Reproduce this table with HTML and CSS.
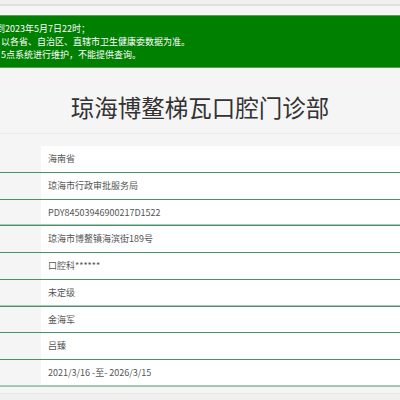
FILE: index.html
```html
<!DOCTYPE html>
<html lang="zh-CN">
<head>
<meta charset="utf-8">
<link rel="stylesheet" href="styles.css">
</head>
<body>
<div class="topbar"></div>
<div class="notice">到2023年5月7日22时；<br>以各省、自治区、直辖市卫生健康委数据为准。<br>5点系统进行维护，不能提供查询。</div>
<div class="titlebox"><h1 class="title">琼海博鳌梯瓦口腔门诊部</h1></div>
<div class="table">
  <div class="row"><div class="label"></div><div class="value">海南省</div></div>
  <div class="row"><div class="label"></div><div class="value">琼海市行政审批服务局</div></div>
  <div class="row sep"><div class="label"></div><div class="value">PDY84503946900217D1522</div></div>
  <div class="row"><div class="label"></div><div class="value">琼海市博鳌镇海滨街189号</div></div>
  <div class="row"><div class="label"></div><div class="value">口腔科******</div></div>
  <div class="row sep"><div class="label"></div><div class="value">未定级</div></div>
  <div class="row"><div class="label"></div><div class="value">金海军</div></div>
  <div class="row"><div class="label"></div><div class="value">吕臻</div></div>
  <div class="row sep"><div class="label"></div><div class="value">2021/3/16 -至- 2026/3/15</div></div>
</div>
<div class="footer"></div>
</body>
</html>
```
FILE: styles.css
```css
html, body {
  margin: 0;
  padding: 0;
}
body {
  background: #f5f5f5;
  font-family: "Noto Sans CJK SC", "Noto Sans", sans-serif;
  overflow: hidden;
}
.topbar {
  height: 4px;
  background: #f0f0f0;
  border-bottom: 2px solid #e0e0e0;
}
.notice {
  margin-top: 9px;
  background: #008000;
  border-top: 1px solid #56a056;
  border-bottom: 1px solid #56a056;
  color: #fff;
  font-size: 9px;
  line-height: 13px;
  padding: 6px 0 6px 1px;
  text-indent: -5px;
  white-space: nowrap;
}
.titlebox {
  padding: 23px 0 10px;
  border-bottom: 1px solid #ebebeb;
  margin-bottom: 12px;
}
.title {
  margin: 0;
  text-align: center;
  font-size: 23.5px;
  line-height: 32px;
  font-weight: normal;
  color: #333;
}
.row {
  display: grid;
  grid-template-columns: 41px 1fr;
  border-bottom: 1px solid #4a9068;
}
.label {
  background: #f5f5f5;
}
.value {
  background: #fff;
  height: 25.75px;
  line-height: 25px;
  padding-left: 7px;
  font-size: 9px;
  color: #555;
}
.row.sep .label,
.row.sep .value {
  box-shadow: inset 0 -1px 0 #a8ccb8;
}
.row.sep:last-child {
  border-bottom-color: #9cc6ad;
}
.footer {
  margin-top: 6px;
  border-top: 1px solid #e4e4e4;
  height: 20px;
  background: #f0f0f0;
}
```
